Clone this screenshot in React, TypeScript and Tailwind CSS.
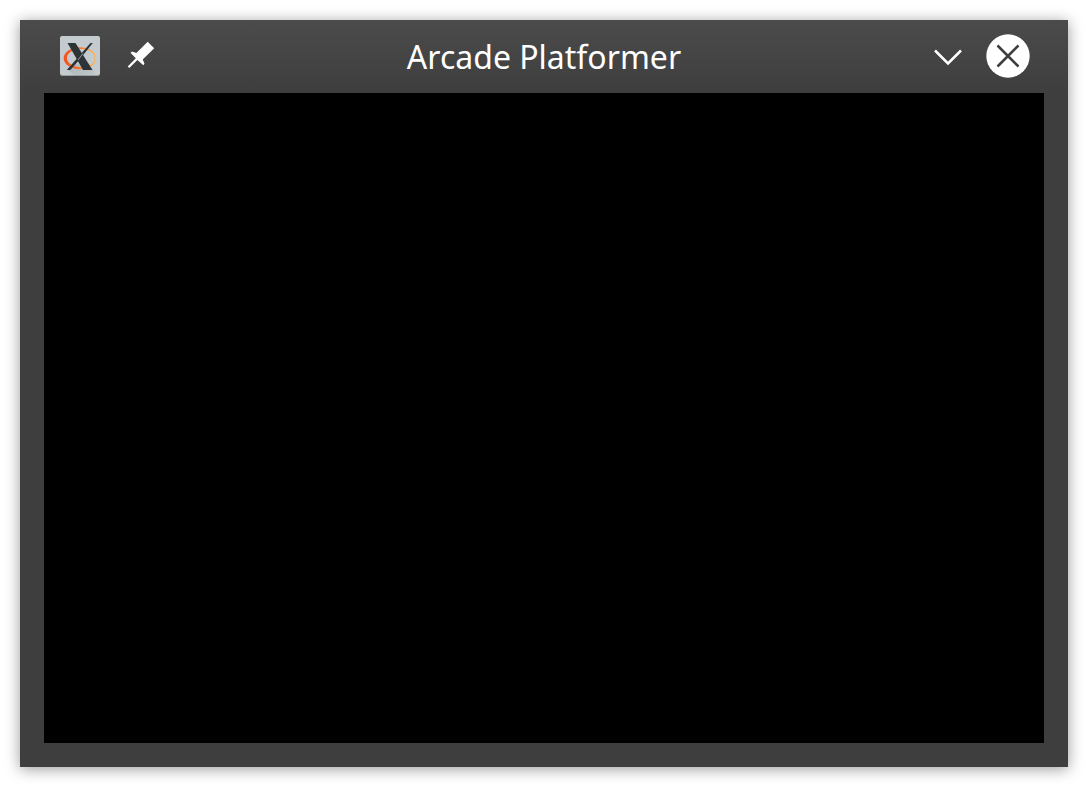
function AppLogo() {
  return (
    <svg viewBox="0 0 40 40" className="size-10" aria-hidden="true">
      <defs>
        <linearGradient id="ring" x1="4" y1="0" x2="36" y2="0" gradientUnits="userSpaceOnUse">
          <stop offset="0" stopColor="#f4511e" />
          <stop offset="0.4" stopColor="#f4682a" />
          <stop offset="1" stopColor="#fdbc5f" />
        </linearGradient>
        <linearGradient id="shade" x1="0" y1="0" x2="1" y2="1">
          <stop offset="0" stopColor="#9fa5a8" />
          <stop offset="1" stopColor="#bcc3c6" />
        </linearGradient>
      </defs>
      <rect width="40" height="40" rx="2.5" fill="#979da0" />
      <rect width="40" height="39" rx="2.5" fill="#c3cbcf" />
      <path d="M7.500 33.500L14 27l19 6.500 2 5.500H14z" fill="url(#shade)" opacity="0.6" />
      <path
        fillRule="evenodd"
        d="M20 11.300C29 11.300 36.200 16 36.200 22.200S29 33.200 20 33.200 3.700 28.500 3.700 22.300 11 11.300 20 11.300zM21 13C13.200 13.200 6.900 17 6.900 22S13 31.200 21 31.200 34.500 27.500 34.500 22.200 28.500 12.900 21 13z"
        fill="url(#ring)"
      />
      <path d="M30.500 7h2.300L22 20.500l-3 3.800L10.300 34H6.800l11-12.500z" fill="#2d3438" />
      <path d="M7.500 7h8l17 27h-9.500z" fill="#2d3438" />
      <path d="M23 17.500l-5 6.500" fill="none" stroke="#c3cbcf" strokeWidth="0.7" />
    </svg>
  );
}

function PinIcon() {
  return (
    <svg viewBox="0 0 32 32" className="size-8" fill="#fff" aria-hidden="true">
      <path d="M23.700 1.700L30.200 8.200 18.700 19.500 20.500 23.800 19.300 25.300 13.400 19.900 5.300 28 3.700 26.400 11.800 18.300 6.500 12.700 8 11.500 12.400 13z" />
    </svg>
  );
}

export default function App() {
  return (
    <div className="flex h-screen bg-white p-5 font-['Noto_Sans',sans-serif]">
      <main className="flex min-w-0 flex-1 flex-col bg-[#3e3e3e] px-6 pb-6 shadow-[0_2px_14px_rgba(0,0,0,0.4)]">
        <header className="-mx-6 grid h-[73px] shrink-0 grid-cols-[1fr_auto_1fr] items-center bg-linear-to-b from-[#4b4b4b] to-[#3e3e3e] px-[38px] pb-px">
          <div className="flex items-center gap-[22px]">
            <button type="button" aria-label="Window menu" className="px-0.5">
              <AppLogo />
            </button>
            <button type="button" aria-label="Keep on all desktops">
              <PinIcon />
            </button>
          </div>
          <h1 className="pt-0.5 text-[32px] leading-10 text-white">Arcade Platformer</h1>
          <div className="flex items-center justify-end gap-4">
            <button type="button" aria-label="Minimize">
              <svg viewBox="0 0 44 44" className="size-11" fill="none" stroke="#fff" strokeWidth="2.500" aria-hidden="true">
                <path d="M9 16.500L22 29.500 35 16.500" />
              </svg>
            </button>
            <button type="button" aria-label="Close">
              <svg viewBox="0 0 44 44" className="size-11" aria-hidden="true">
                <circle cx="22" cy="22" r="21.700" fill="#fff" />
                <path d="M11.500 11.500l21 21M32.500 11.500l-21 21" fill="none" stroke="#3e3e3e" strokeWidth="2.500" />
              </svg>
            </button>
          </div>
        </header>
        <section aria-label="Game screen" className="flex-1 bg-black" />
      </main>
    </div>
  );
}
